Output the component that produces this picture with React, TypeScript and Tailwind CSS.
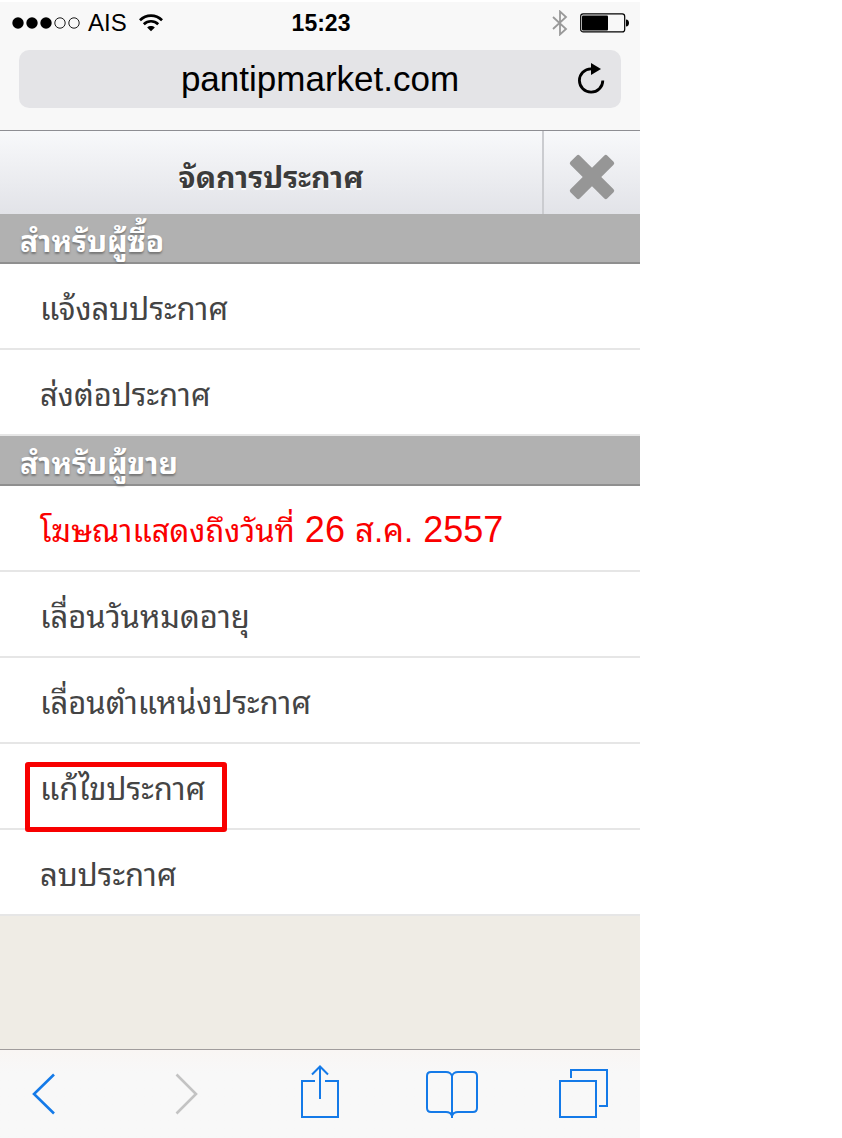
import React from "react";

const buyerItems = ["แจ้งลบประกาศ", "ส่งต่อประกาศ"];

const sellerItems = [
  { label: "เลื่อนวันหมดอายุ" },
  { label: "เลื่อนตำแหน่งประกาศ" },
  { label: "แก้ไขประกาศ", marked: true },
  { label: "ลบประกาศ" },
];

const StatusBar: React.FC = () => (
  <div className="flex h-[42px] items-center pr-2.5 pl-3">
    <div className="flex flex-1 items-center">
      <svg className="h-3 w-[70px]" viewBox="0 0 70 12" aria-hidden="true">
        <circle cx="6" cy="6" r="5.7" />
        <circle cx="20" cy="6" r="5.7" />
        <circle cx="34" cy="6" r="5.7" />
        <circle cx="48" cy="6" r="5.2" fill="none" stroke="#000" strokeWidth="0.9" />
        <circle cx="62" cy="6" r="5.2" fill="none" stroke="#000" strokeWidth="0.9" />
      </svg>
      <span className="ml-1.5 text-2xl">AIS</span>
      <svg className="ml-3 h-[18px] w-6" viewBox="0 0 25 18" fill="none" stroke="#000" aria-hidden="true">
        <path d="M1 6.2C7.5-.2 17.5-.2 24 6.2" strokeWidth="2.8" />
        <path d="M5 10.2c4.3-4 10.7-4 15 0" strokeWidth="2.8" />
        <path d="M8.5 13.7c2.3-2 5.7-2 8 0l-4 4z" fill="#000" stroke="none" />
      </svg>
    </div>
    <span className="text-[23px] font-bold">15:23</span>
    <div className="flex flex-1 items-center justify-end">
      <svg className="h-[26px] w-4" viewBox="0 0 16 26" fill="none" stroke="#999" strokeWidth="1.8" aria-hidden="true">
        <path d="M1 7l13 12-6 5.5V1.5L14 7 1 19" />
      </svg>
      <svg className="ml-3 h-5 w-[50px]" viewBox="0 0 50 20" aria-hidden="true">
        <rect x="0.7" y="0.9" width="44" height="18" rx="2.5" fill="none" stroke="#000" strokeWidth="1.2" />
        <rect x="2" y="2.5" width="26" height="15" rx="1" />
        <path d="M46 6.5c4 0 4 7 0 7z" />
      </svg>
    </div>
  </div>
);

const AddressBar: React.FC = () => (
  <div className="mx-[19px] mt-1.5 mb-[22px] flex h-[58px] items-center rounded-[10px] bg-[#e4e4e7] px-3">
    <div className="w-9 shrink-0" />
    <input
      type="text"
      aria-label="Address"
      defaultValue="pantipmarket.com"
      className="h-full min-w-0 flex-1 bg-transparent text-center text-[35px] outline-none"
    />
    <button type="button" aria-label="Reload" className="flex w-9 shrink-0 justify-center">
      <svg className="h-8 w-7" viewBox="0 0 28 32">
        <path d="M25.8 17.5A11.7 11.7 0 1 1 14 5.8h2" fill="none" stroke="#000" strokeWidth="2.8" />
        <path d="M14 0l10 6-10 6z" />
      </svg>
    </button>
  </div>
);

const SectionHeading: React.FC<{ children: React.ReactNode }> = ({ children }) => (
  <h2 className="flex h-[50px] items-center border-b-2 border-[#8f8f8f] bg-[#b1b1b1] px-5 pt-2 text-[30px] leading-none font-bold text-white [text-shadow:0_2px_2px_#777]">
    {children}
  </h2>
);

const MenuItem: React.FC<{ label: string; marked?: boolean }> = ({ label, marked }) => (
  <li className="relative border-b-2 border-[#e6e6e6] bg-white">
    <a href="#" className="flex h-[84px] items-center px-10 pt-2 text-[31px]">
      {label}
    </a>
    {marked && (
      <span className="pointer-events-none absolute top-[18px] left-[25px] z-10 h-[70px] w-[202px] rounded-[3px] border-[5px] border-[#f80000]" />
    )}
  </li>
);

const Toolbar: React.FC = () => (
  <nav className="grid h-[89px] grid-cols-[143fr_125fr_125fr_133fr_50px] items-center justify-items-start border-t border-[#a09c9c] bg-gradient-to-b from-[#f9f6f4] to-[#f8f8f8] to-25% px-8 text-[#147ae8]">
    <button type="button" aria-label="Back">
      <svg className="h-[42px] w-6" viewBox="0 0 24 42" fill="none" stroke="currentColor" strokeWidth="2.6">
        <path d="M22 1.5L2 21l20 19.5" />
      </svg>
    </button>
    <button type="button" aria-label="Forward" disabled>
      <svg className="h-[42px] w-6" viewBox="0 0 24 42" fill="none" stroke="#c3c3c3" strokeWidth="2.6">
        <path d="M1.5 1.5L21 21 1.5 40.5" />
      </svg>
    </button>
    <button type="button" aria-label="Share">
      <svg className="h-[58px] w-10" viewBox="0 0 40 58" fill="none" stroke="currentColor" strokeWidth="2">
        <path d="M15 16H2v36h36V16H25M20 34V2M12 9.5l8-8 8 8" />
      </svg>
    </button>
    <button type="button" aria-label="Bookmarks">
      <svg className="h-[48px] w-[54px]" viewBox="0 0 54 48" fill="none" stroke="currentColor" strokeWidth="2">
        <path d="M27 48V6c-1-3-3-4-6-4H6C3 2 2 4 2 6v32c0 3 1 4 4 4h15c3 0 5 1 6 4 1-3 3-4 6-4h15c3 0 4-1 4-4V6c0-2-1-4-4-4H33c-3 0-5 1-6 4" />
        <path d="M24.5 42.5h5L27 47z" fill="currentColor" stroke="none" />
      </svg>
    </button>
    <button type="button" aria-label="Tabs">
      <svg className="h-[50px] w-[50px]" viewBox="0 0 50 50" fill="none" stroke="currentColor" strokeWidth="2">
        <path d="M2 12h36v36H2zM13 9V1h36v36h-8" />
      </svg>
    </button>
  </nav>
);

const App: React.FC = () => {
  return (
    <div className="min-h-screen bg-white font-['Liberation_Sans','Thonburi','Noto_Sans_Thai_Looped','Loma','Waree','Noto_Sans_Thai','Noto_Sans',sans-serif]">
      <div className="flex min-h-screen w-full max-w-[640px] flex-col bg-[#efece5] text-[#444]">
        <header className="border-t-2 border-b border-t-white border-b-[#8e8e93] bg-[#f8f8f8] text-black">
          <StatusBar />
          <AddressBar />
        </header>

        <main>
          <div className="flex h-[83px] bg-gradient-to-b from-[#f8f9fb] to-[#e2e3e8]">
            <h1 className="flex flex-1 items-center justify-center pt-2.5 text-[30px] font-bold text-[#3c3c3c] [text-shadow:0_2px_0_#fff]">
              จัดการประกาศ
            </h1>
            <button
              type="button"
              aria-label="ปิด"
              className="flex w-[98px] items-center justify-center border-l-2 border-[#cbccd0] pt-2"
            >
              <svg className="h-12 w-12" viewBox="0 0 48 48" fill="#969696">
                <rect x="-2" y="17.5" width="52" height="13" rx="2" transform="rotate(45 24 24)" />
                <rect x="-2" y="17.5" width="52" height="13" rx="2" transform="rotate(-45 24 24)" />
              </svg>
            </button>
          </div>

          <SectionHeading>สำหรับผู้ซื้อ</SectionHeading>
          <ul>
            {buyerItems.map((label) => (
              <MenuItem key={label} label={label} />
            ))}
          </ul>

          <SectionHeading>สำหรับผู้ขาย</SectionHeading>
          <div className="flex h-[86px] items-center border-b-2 border-[#e6e6e6] bg-white px-10 pt-1 text-[#fa0000]">
            <p className="text-[36px]">
              <span className="text-[31px]">โฆษณาแสดงถึงวันที่</span> 26 <span className="text-[33px]">ส.ค.</span> 2557
            </p>
          </div>
          <ul>
            {sellerItems.map((item) => (
              <MenuItem key={item.label} label={item.label} marked={item.marked} />
            ))}
          </ul>
        </main>

        <div className="flex-1" />
        <Toolbar />
      </div>
    </div>
  );
};

export default App;
